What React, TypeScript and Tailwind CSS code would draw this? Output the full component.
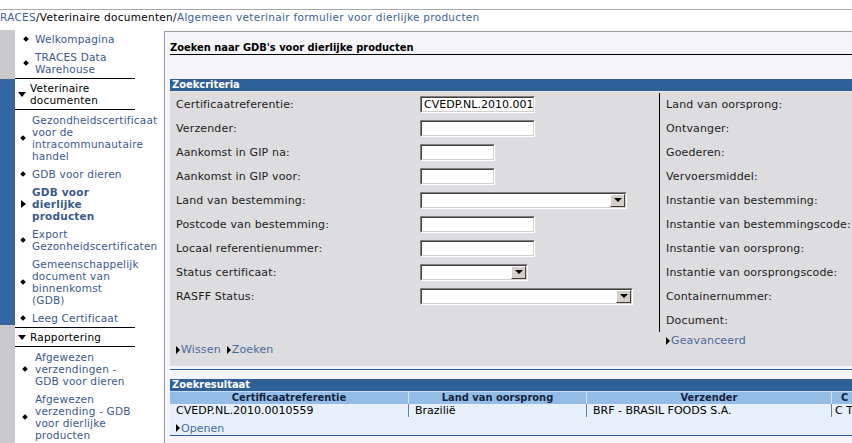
import React from "react";

const navBlue = "text-[#3b5a8b]";

function Bullet() {
  return <span className="inline-block h-[4px] w-[4px] shrink-0 rotate-45 bg-black" />;
}

function ArrowRight() {
  return (
    <span className="inline-block h-0 w-0 shrink-0 border-y-[4px] border-l-[5px] border-y-transparent border-l-black" />
  );
}

function ArrowDown() {
  return (
    <span className="inline-block h-0 w-0 shrink-0 border-x-[4px] border-t-[5px] border-x-transparent border-t-black" />
  );
}

type NavItemProps = {
  lines: string[];
  pad: string;
  gap: string;
  bold?: boolean;
  active?: boolean;
};

function NavItem({ lines, pad, gap, bold, active }: NavItemProps) {
  return (
    <div className={`flex items-center py-[3px] ${pad}`}>
      {active ? <ArrowRight /> : <Bullet />}
      <div className={`${gap} whitespace-nowrap ${navBlue} ${bold ? "font-bold" : ""}`}>
        {lines.map((l) => (
          <div key={l}>{l}</div>
        ))}
      </div>
    </div>
  );
}

function SectionHead({ lines }: { lines: string[] }) {
  return (
    <div className="flex items-center border-y border-black py-[3px] pl-[3px]">
      <ArrowDown />
      <div className="ml-[4px] whitespace-nowrap text-black">
        {lines.map((l) => (
          <div key={l}>{l}</div>
        ))}
      </div>
    </div>
  );
}

function Sidebar() {
  return (
    <div className="flex w-[164px] shrink-0">
      <div className="flex w-[15px] flex-col">
        <div className="h-[49px] bg-[#c9c9cb]" />
        <div className="h-[246px] bg-[#3566a3]" />
        <div className="flex-1 bg-[#c9c9cb]" />
      </div>
      <div className="w-[120px] text-[10.5px] leading-[12px] tracking-[0.2px]">
        <NavItem lines={["Welkompagina"]} pad="pl-[9px]" gap="ml-[7px]" />
        <NavItem lines={["TRACES Data", "Warehouse"]} pad="pl-[9px]" gap="ml-[7px]" />
        <SectionHead lines={["Veterinaire", "documenten"]} />
        <div className="pt-[1px]">
          <NavItem
            lines={["Gezondheidscertificaat", "voor de", "intracommunautaire", "handel"]}
            pad="pl-[6px]"
            gap="ml-[7px]"
          />
          <NavItem lines={["GDB voor dieren"]} pad="pl-[6px]" gap="ml-[7px]" />
          <NavItem
            lines={["GDB voor", "dierlijke", "producten"]}
            pad="pl-[6px]"
            gap="ml-[6px]"
            bold
            active
          />
          <NavItem lines={["Export", "Gezonheidscertificaten"]} pad="pl-[6px]" gap="ml-[7px]" />
          <NavItem
            lines={["Gemeenschappelijk", "document van", "binnenkomst", "(GDB)"]}
            pad="pl-[6px]"
            gap="ml-[7px]"
          />
          <NavItem lines={["Leeg Certificaat"]} pad="pl-[6px]" gap="ml-[7px]" />
        </div>
        <SectionHead lines={["Rapportering"]} />
        <div className="border-b border-black pt-[1px]">
          <NavItem
            lines={["Afgewezen", "verzendingen -", "GDB voor dieren"]}
            pad="pl-[8px]"
            gap="ml-[8px]"
          />
          <NavItem
            lines={["Afgewezen", "verzending - GDB", "voor dierlijke", "producten"]}
            pad="pl-[8px]"
            gap="ml-[8px]"
          />
        </div>
      </div>
    </div>
  );
}

function TextInput({ width, value }: { width: string; value?: string }) {
  return (
    <div className={`h-[17px] ${width} border border-b-white border-l-[#808080] border-r-white border-t-[#808080]`}>
      <div className="h-full overflow-hidden whitespace-nowrap border border-b-[#d4d0c8] border-l-[#404040] border-r-[#d4d0c8] border-t-[#404040] bg-white pl-[2px] text-[11px] leading-[13px] tracking-normal text-black">
        {value}
      </div>
    </div>
  );
}

function SelectBox({ width }: { width: string }) {
  return (
    <div className={`h-[17px] ${width} border border-b-white border-l-[#808080] border-r-white border-t-[#808080]`}>
      <div className="flex h-full justify-end border border-b-[#d4d0c8] border-l-[#404040] border-r-[#d4d0c8] border-t-[#404040] bg-white">
        <div className="flex h-[13px] w-[15px] items-center justify-center border border-b-[#404040] border-l-white border-r-[#404040] border-t-white bg-[#d4d0c8]">
          <span className="inline-block h-0 w-0 border-x-[4px] border-t-[4px] border-x-transparent border-t-black" />
        </div>
      </div>
    </div>
  );
}

const leftRows: { label: string; field: React.ReactNode }[] = [
  { label: "Certificaatreferentie:", field: <TextInput width="w-[115px]" value="CVEDP.NL.2010.001" /> },
  { label: "Verzender:", field: <TextInput width="w-[115px]" /> },
  { label: "Aankomst in GIP na:", field: <TextInput width="w-[75px]" /> },
  { label: "Aankomst in GIP voor:", field: <TextInput width="w-[75px]" /> },
  { label: "Land van bestemming:", field: <SelectBox width="w-[207px]" /> },
  { label: "Postcode van bestemming:", field: <TextInput width="w-[115px]" /> },
  { label: "Locaal referentienummer:", field: <TextInput width="w-[115px]" /> },
  { label: "Status certificaat:", field: <SelectBox width="w-[108px]" /> },
  { label: "RASFF Status:", field: <SelectBox width="w-[213px]" /> },
];

const rightRows = [
  "Land van oorsprong:",
  "Ontvanger:",
  "Goederen:",
  "Vervoersmiddel:",
  "Instantie van bestemming:",
  "Instantie van bestemmingscode:",
  "Instantie van oorsprong:",
  "Instantie van oorsprongscode:",
  "Containernummer:",
  "Document:",
];

function LinkArrow({ label }: { label: string }) {
  return (
    <span className="inline-flex items-center">
      <span className="inline-block h-0 w-0 border-y-[4px] border-l-[4px] border-y-transparent border-l-black" />
      <span className="ml-[1px] text-[#4a6b9c]">{label}</span>
    </span>
  );
}

const cols = [
  { head: "Certificaatreferentie", val: "CVEDP.NL.2010.0010559", w: "w-[238px]", pad: "pl-[6px]" },
  { head: "Land van oorsprong", val: "Brazilië", w: "w-[178px]", pad: "pl-[6px]" },
  { head: "Verzender", val: "BRF - BRASIL FOODS S.A.", w: "w-[245px]", pad: "pl-[6px]" },
  { head: "C", val: "C T", w: "w-[40px]", pad: "pl-[3px]" },
];

function Main() {
  return (
    <div className="mt-[1px] min-w-0 flex-1 overflow-hidden border-l border-t border-[#9c9c9c] bg-[#f5f5f9] pl-[5px]">
      <div className="mt-[9px] w-[720px] border-b border-black font-['DejaVu_Sans_Condensed','DejaVu_Sans',sans-serif] text-[11px] font-bold leading-[13px] text-black">
        Zoeken naar GDB's voor dierlijke producten
      </div>

      <div className="mt-[24px] h-[12px] w-[720px] bg-[#2f5f97] pl-[2px] font-['DejaVu_Sans_Condensed','DejaVu_Sans',sans-serif] text-[11px] font-bold leading-[12px] text-white">
        Zoekcriteria
      </div>
      <div className="h-[1px] w-[720px] bg-[#e4e8f0]" />

      <div className="flex w-[720px] bg-[#dddcdf] text-[11px] leading-[13px] tracking-[0.15px] text-[#1c1c1c]">
        <div className="w-[489px] shrink-0 pl-[6px]">
          {leftRows.map((r) => (
            <div key={r.label} className="flex h-[24px] items-center">
              <div className="w-[244px] shrink-0">{r.label}</div>
              {r.field}
            </div>
          ))}
          <div className="mt-[35px] flex gap-[6px] pb-[10px]">
            <LinkArrow label="Wissen" />
            <LinkArrow label="Zoeken" />
          </div>
        </div>
        <div className="flex-1">
          <div className="mt-[1px] border-l border-black pl-[6px]">
            {rightRows.map((l, i) => (
              <div key={l} className={`flex items-center whitespace-nowrap ${i === 0 ? "h-[23px]" : "h-[24px]"}`}>
                {l}
              </div>
            ))}
          </div>
          <div className="pl-[7px] pt-[2px]">
            <LinkArrow label="Geavanceerd" />
          </div>
        </div>
      </div>

      <div className="h-[3px]" />
      <div className="h-[1px] w-[720px] bg-[#2f5f97]" />
      <div className="h-[9px]" />

      <div className="h-[12px] w-[720px] bg-[#2f5f97] pl-[2px] font-['DejaVu_Sans_Condensed','DejaVu_Sans',sans-serif] text-[11px] font-bold leading-[12px] text-white">
        Zoekresultaat
      </div>
      <div className="flex w-[720px] border-t border-[#c8dcf0] bg-[#93bde6] font-['DejaVu_Sans_Condensed','DejaVu_Sans',sans-serif] text-[11px] font-bold leading-[12px] text-[#13233f]">
        {cols.map((c, i) => (
          <div
            key={c.head}
            className={`${c.w} shrink-0 whitespace-nowrap ${i === 3 ? "pl-[9px] text-left" : "text-center"} ${i > 0 ? "border-l border-[#d4e4f4]" : ""}`}
          >
            {c.head}
          </div>
        ))}
      </div>
      <div className="w-[720px] bg-[#e6f0fa] text-[11px] leading-[13px] text-black">
        <div className="flex">
          {cols.map((c, i) => (
            <div key={c.head} className={`${c.w} shrink-0 whitespace-nowrap ${c.pad} ${i > 0 ? "border-l border-[#6d7c92]" : ""}`}>
              {c.val}
            </div>
          ))}
        </div>
        <div className="flex h-[18px] items-center pl-[6px] pt-[4px]">
          <LinkArrow label="Openen" />
        </div>
      </div>
      <div className="h-[1px] w-[720px] bg-[#2f5f97]" />
    </div>
  );
}

export default function App() {
  return (
    <div className="h-[443px] w-[852px] overflow-hidden bg-white font-['DejaVu_Sans',Verdana,sans-serif]">
      <div className="h-[10px] border-b border-[#a8a8a8]" />
      <div className="h-[20px] whitespace-nowrap pt-[1px] text-[10.5px] leading-[12px] tracking-[0.3px]">
        <span className="text-[#3d6396]">RACES</span>
        <span className="text-black">/Veterinaire documenten/</span>
        <span className="text-[#3d6396]">Algemeen veterinair formulier voor dierlijke producten</span>
      </div>
      <div className="flex h-[413px]">
        <Sidebar />
        <Main />
      </div>
    </div>
  );
}
